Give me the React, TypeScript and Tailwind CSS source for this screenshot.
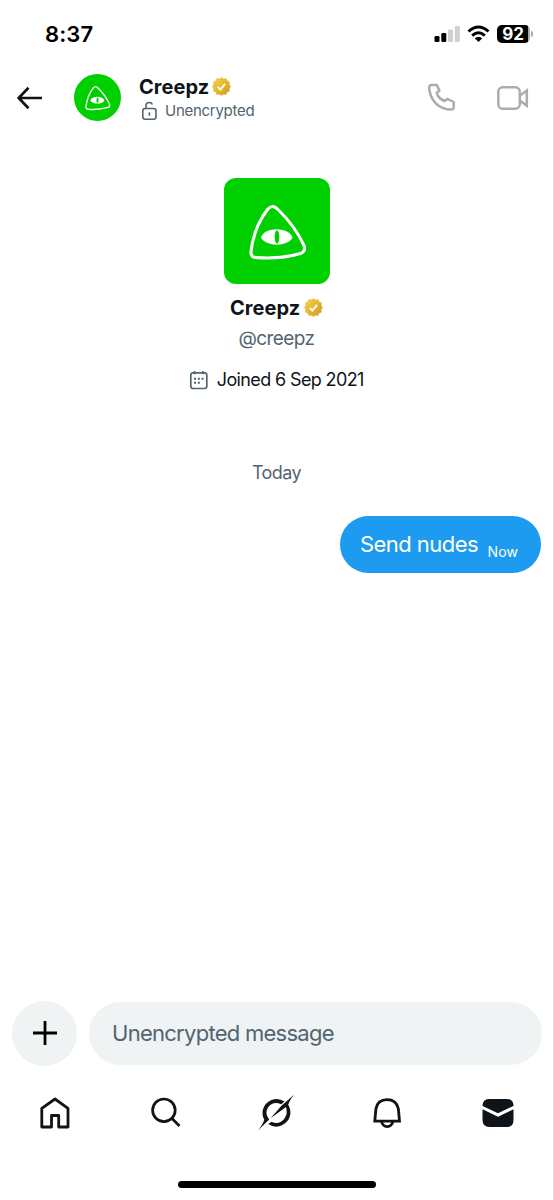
import React from "react";

const nav = "flex w-[110.7px] justify-center";

function CreepzMark({ className }: { className: string }) {
  return (
    <svg viewBox="0 0 106 106" className={className}>
      <path
        d="M43.5 31.5Q48.5 25.5 54 31.5Q71 48 80 67.5Q82 73.5 76.500 75.500Q56 81.500 31.500 79.500Q26.500 79 27 73.500Q30 49 43.5 31.5Z"
        fill="none"
        stroke="#fff"
        strokeWidth="3"
        strokeLinejoin="round"
      />
      <path d="M37 59.500C40 48.500 65 48.500 68.500 59.500C64.500 69 41 69 37 59.500Z" fill="#fff" />
      <ellipse cx="53" cy="59" rx="2.300" ry="6.700" fill="#00d000" />
    </svg>
  );
}

function Verified({ className }: { className: string }) {
  return (
    <svg viewBox="0 0 20 20" className={className}>
      <defs>
        <linearGradient id="gold" x1="0" y1="0" x2="1" y2="1">
          <stop offset="0" stopColor="#f6d74a" />
          <stop offset="0.5" stopColor="#e6b730" />
          <stop offset="1" stopColor="#cf9423" />
        </linearGradient>
      </defs>
      <path
        d="M10 .4l2.200 1.600 2.700-.4 1 2.500 2.600 1-.4 2.700L19.600 10l-1.500 2.200.4 2.700-2.600 1-1 2.600-2.700-.4L10 19.600l-2.200-1.500-2.700.4-1-2.600-2.600-1 .4-2.700L.4 10l1.500-2.200-.4-2.700 2.600-1 1-2.500 2.700.4z"
        fill="url(#gold)"
        stroke="#d9a730"
        strokeWidth=".4"
      />
      <path d="M6 10.400l2.800 2.800 5-6" fill="none" stroke="#fff" strokeWidth="1.900" />
    </svg>
  );
}

function StatusBar() {
  return (
    <div className="flex h-[62px] shrink-0 items-start justify-between pl-[45px] pr-[23px]">
      <span className="mt-[20px] text-[22px] leading-[28px] font-semibold tracking-[0.1px] text-black">8:37</span>
      <div className="mt-[24px] flex h-[20px] items-center">
        <svg className="h-[20px] w-[27px]" viewBox="0 0 27 20">
          <rect x="0.500" y="12" width="5" height="6" rx="1.300" fill="#000" />
          <rect x="7.300" y="9" width="5" height="9" rx="1.300" fill="#000" />
          <rect x="14" y="5.500" width="5" height="12.500" rx="1.300" fill="#d0d0d0" />
          <rect x="20.800" y="2" width="5" height="16" rx="1.300" fill="#d0d0d0" />
        </svg>
        <svg className="ml-[6px] h-[20px] w-[23px]" viewBox="0 0 23 20" fill="none" stroke="#000" strokeWidth="3">
          <path d="M1.500 7.500Q11.500-1.500 21.500 7.500" />
          <path d="M5.200 11.600Q11.500 6 17.800 11.600" />
          <path d="M7.700 14.300Q11.500 11.200 15.300 14.300L11.500 18Z" fill="#000" stroke="none" />
        </svg>
        <div className="relative ml-[7px] flex h-[18px] w-[33px] items-center justify-center rounded-[5px] bg-[linear-gradient(to_right,#000_31px,#aaa_31px)] pr-px text-[17px] leading-none font-bold text-white">
          92
          <span className="absolute top-[6px] -right-[3px] h-[6px] w-[2px] rounded-r-full bg-[#aaa]" />
        </div>
      </div>
    </div>
  );
}

function Header() {
  return (
    <header className="flex h-[71px] shrink-0 items-center pl-[16px] pr-[24px]">
      <svg className="h-[24px] w-[27px]" viewBox="0 0 27 24" fill="none" stroke="#0f1419" strokeWidth="2.700">
        <path d="M12.500 1.700L2.700 12l9.800 10.300M2.700 12H26" />
      </svg>
      <div className="ml-[31px] size-[47px] rounded-full bg-[#00d000]">
        <CreepzMark className="size-[47px]" />
      </div>
      <div className="ml-[18px] flex flex-col pt-[2px]">
        <div className="flex h-[25px] items-center">
          <span className="w-[73px] text-[20px] font-bold tracking-[0.05px] text-[#0f1419]">Creepz</span>
          <Verified className="mb-px size-[19px]" />
        </div>
        <div className="flex h-[23px] items-center">
          <svg className="ml-[2.500px] h-[20px] w-[15px]" viewBox="0 0 15 20" fill="none" stroke="#536471" strokeWidth="1.600">
            <rect x=".8" y="7.500" width="13.200" height="10.700" rx="2.500" />
            <path d="M4 7.500V4.800Q4 1.500 7.300 1.500Q9.500 1.500 10.400 3.500M7.400 11.300v3.500" />
          </svg>
          <span className="ml-[8.500px] text-[15px] tracking-[-0.27px] whitespace-nowrap text-[#536471]">Unencrypted</span>
        </div>
      </div>
      <div className="ml-auto flex items-center gap-[40px]">
        <svg className="size-[29px]" viewBox="0 0 29 29" fill="none" stroke="#a9adb1" strokeWidth="2.500" strokeLinejoin="round">
          <path d="M4 1.900H9.800L12.400 7.500L9.800 9.900Q10.200 12.500 12.200 14.500T17.600 18L20.300 15.900L26.700 19V25Q26.300 26.600 24.500 26.600Q15 26.600 8.500 20.100Q2.200 12.700 2.200 3.900Q2.300 2.200 4 1.900Z" />
        </svg>
        <svg className="h-[26px] w-[33px]" viewBox="0 0 33 26" fill="none" stroke="#a9adb1" strokeWidth="2.500">
          <rect x="2.300" y="2.200" width="21.500" height="21.500" rx="4.500" />
          <path d="M24.500 10.200L30.800 5.500V20.800L24.500 16" />
        </svg>
      </div>
    </header>
  );
}

function Profile() {
  return (
    <section className="flex flex-col items-center pt-[44.6px]">
      <div className="size-[106px] rounded-[12px] bg-[#00d000]">
        <CreepzMark className="size-[106px]" />
      </div>
      <div className="mt-[10.500px] flex h-[28px] items-center">
        <span className="w-[74px] text-[20px] font-bold tracking-[0.05px] text-[#0f1419]">Creepz</span>
        <Verified className="mb-px size-[19px]" />
      </div>
      <div className="mt-[2.500px] h-[28px] text-[19px] leading-[28px] tracking-[-0.6px] text-[#536471]">@creepz</div>
      <div className="mt-[13px] flex h-[28px] items-center">
        <svg className="size-[20px]" viewBox="0 0 20 20" fill="none" stroke="#536471" strokeWidth="1.700">
          <rect x="1.800" y="2.800" width="16" height="15.700" rx="2.200" />
          <path d="M5.600 1v3.300M14 1v3.300" />
          <path d="M5 8.700h2M8.800 8.700h2M12.600 8.700h2M5 12.800h2M8.800 12.800h2" strokeWidth="2" />
        </svg>
        <span className="ml-[7.500px] text-[18px] tracking-[-0.63px] whitespace-nowrap text-[#0f1419]">Joined 6 Sep 2021</span>
      </div>
    </section>
  );
}

function Composer() {
  return (
    <div className="flex h-[65px] shrink-0 items-center gap-[12px] pr-[11px] pl-[12px]">
      <button className="flex size-[65px] shrink-0 items-center justify-center rounded-full bg-[#eff3f4]">
        <svg className="size-[24px]" viewBox="0 0 24 24" stroke="#000" strokeWidth="2.800">
          <path d="M12 0v24M0 12h24" />
        </svg>
      </button>
      <div className="mt-px flex h-[63px] flex-1 items-center rounded-full bg-[#eff3f4] pl-[23px] text-[22px] tracking-[-0.73px] whitespace-nowrap text-[#536471]">
        Unencrypted message
      </div>
    </div>
  );
}

function BottomNav() {
  return (
    <nav className="flex h-[96px] shrink-0 items-center pb-[1.500px]">
      <span className={nav}>
        <svg className="size-[34px]" viewBox="0 0 34 34" fill="none" stroke="#0f1419" strokeWidth="2.800">
          <path d="M3.800 12.300L17 3L30 12.300V31H20.700V19.500H13.500V31H3.800Z" strokeLinejoin="round" />
        </svg>
      </span>
      <span className={nav}>
        <svg className="size-[34px]" viewBox="0 0 34 34" fill="none" stroke="#0f1419" strokeWidth="2.700">
          <circle cx="14.900" cy="14.300" r="11.300" />
          <path d="M23 22.500L30.500 30" />
        </svg>
      </span>
      <span className={nav}>
        <svg className="size-[38px]" viewBox="0 0 38 38" fill="#0f1419">
          <path d="M13.500 24.300L29 13Q31.200 20 27 25.200Q21.800 31 14.500 27.700L11.200 30Q18 34.500 25 31.300Q31.500 28 33.100 21.500Q34.200 15.500 31.200 10.700Q32.500 6.500 37 .8L24.500 11.700Z" />
          <path d="M1 36.500L12.200 25.600Q7 19 11.300 12.900Q16.500 6.700 24.200 10.300L27.500 7.600Q21.500 3.300 14.500 6Q7.600 9 5.900 15.500Q4.600 21 7.200 25.500Q6.500 29.500 1 36.500Z" />
        </svg>
      </span>
      <span className={nav}>
        <svg className="size-[34px]" viewBox="0 0 34 34" fill="none" stroke="#0f1419" strokeWidth="2.800">
          <path d="M4.800 25.100Q5.300 19 6 12.500Q7.700 3.600 17 3.600T28.300 12.500Q29 19 29.500 25.100Z" />
          <path d="M11.400 25.500Q12.800 30.600 17.200 30.600T23 25.500" />
        </svg>
      </span>
      <span className={nav}>
        <svg className="size-[34px]" viewBox="0 0 34 34" fill="#0f1419">
          <path d="M1.600 9.900V8.600Q2.300 3 8.500 3H25.500Q31.800 3 32.400 8.600V9.900L17 17.300Z" />
          <path d="M1.500 13.300L17 20.800L32.500 13.300V24Q32.500 31 25.500 31H8.500Q1.500 31 1.500 24Z" />
        </svg>
      </span>
    </nav>
  );
}

export default function App() {
  return (
    <main className="flex h-[1200px] w-[554px] flex-col border-r border-[#d9dcde] bg-white font-['Inter',sans-serif]">
      <StatusBar />
      <Header />
      <Profile />
      <div className="mt-[65.4px] text-center text-[18px] leading-[28px] tracking-[-0.6px] text-[#536471]">Today</div>
      <div className="mt-[29px] mr-[12px] flex h-[57px] w-[201px] items-center self-end rounded-full bg-[#1d9bf0] pl-[20px] whitespace-nowrap text-white">
        <span className="w-[127.500px] text-[22px] tracking-[-0.55px]">Send nudes</span>
        <span className="mt-[15px] text-[14px] tracking-[0.2px]">Now</span>
      </div>
      <div className="flex-1" />
      <Composer />
      <BottomNav />
      <div className="flex h-[38.5px] shrink-0 justify-center pt-[19px]">
        <span className="h-[7px] w-[198px] rounded-full bg-black" />
      </div>
    </main>
  );
}
